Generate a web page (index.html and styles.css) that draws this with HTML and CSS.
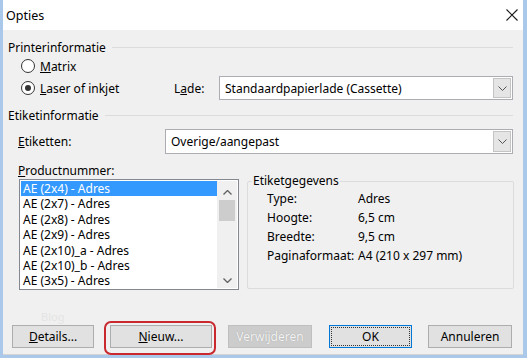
FILE: index.html
```html
<!DOCTYPE html>
<html lang="nl">
<head>
    <meta charset="UTF-8">
    <title>Opties</title>
    <link rel="stylesheet" href="styles.css">
</head>
<body>
    <div class="window">
        <!-- Titelbalk -->
        <header class="titlebar">
            <span class="title">Opties</span>
            <svg class="close" width="12" height="12" viewBox="0 0 12 12">
                <path d="M0.5 0.5 L11.5 11.5 M11.5 0.5 L0.5 11.5" stroke="#1a1a1a" stroke-width="1.1" fill="none"/>
            </svg>
        </header>

        <main class="content">
            <!-- Printerinformatie -->
            <div class="group-head">
                <span>Printerinformatie</span>
                <span class="line"></span>
            </div>
            <div class="radio-row first">
                <span class="radio"></span>
                <span><u>M</u>atrix</span>
            </div>
            <div class="radio-row second">
                <span class="radio checked"></span>
                <span class="radio-label"><u>L</u>aser of inkjet</span>
                <span class="lade-label">L<u>a</u>de:</span>
                <div class="select lade-select">
                    <span class="select-text">Standaardpapierlade (Cassette)</span>
                    <span class="select-btn">
                        <svg width="9" height="5" viewBox="0 0 9 5"><path d="M0.5 0.5 L4.5 4.5 L8.5 0.5" stroke="#555" fill="none"/></svg>
                    </span>
                </div>
            </div>

            <!-- Etiketinformatie -->
            <div class="group-head second-head">
                <span>Etiketinformatie</span>
                <span class="line"></span>
            </div>
            <div class="etiket-row">
                <span class="etiket-label"><u>E</u>tiketten:</span>
                <div class="select etiket-select">
                    <span class="select-text">Overige/aangepast</span>
                    <span class="select-btn">
                        <svg width="9" height="5" viewBox="0 0 9 5"><path d="M0.5 0.5 L4.5 4.5 L8.5 0.5" stroke="#555" fill="none"/></svg>
                    </span>
                </div>
            </div>
            <div class="product-label"><u>P</u>roductnummer:</div>

            <div class="product-row">
                <div class="listbox">
                    <ul class="list-items">
                        <li class="selected">AE (2x4) - Adres</li>
                        <li>AE (2x7) - Adres</li>
                        <li>AE (2x8) - Adres</li>
                        <li>AE (2x9) - Adres</li>
                        <li>AE (2x10)_a - Adres</li>
                        <li>AE (2x10)_b - Adres</li>
                        <li>AE (3x5) - Adres</li>
                    </ul>
                    <div class="scrollbar">
                        <svg width="9" height="5" viewBox="0 0 9 5"><path d="M0.5 4.5 L4.5 0.5 L8.5 4.5" stroke="#606060" stroke-width="1.3" fill="none"/></svg>
                        <span class="thumb"></span>
                        <span class="track"></span>
                        <svg width="9" height="5" viewBox="0 0 9 5"><path d="M0.5 0.5 L4.5 4.5 L8.5 0.5" stroke="#606060" stroke-width="1.3" fill="none"/></svg>
                    </div>
                </div>

                <fieldset class="details-box">
                    <legend>Etiketgegevens</legend>
                    <dl class="details">
                        <dt>Type:</dt><dd>Adres</dd>
                        <dt>Hoogte:</dt><dd>6,5 cm</dd>
                        <dt>Breedte:</dt><dd>9,5 cm</dd>
                        <dt>Paginaformaat:</dt><dd>A4 (210 x 297 mm)</dd>
                    </dl>
                </fieldset>
            </div>

            <div class="ghost">Blog</div>

            <!-- Knoppen -->
            <div class="buttons">
                <button class="btn btn-details"><u>D</u>etails...</button>
                <span class="highlight">
                    <button class="btn btn-new"><u>N</u>ieuw...</button>
                </span>
                <button class="btn btn-delete" disabled>Verwijderen</button>
                <button class="btn btn-ok"><span class="focus">OK</span></button>
                <button class="btn btn-cancel">Annuleren</button>
            </div>
        </main>
    </div>
</body>
</html>
```

FILE: styles.css
```css
:root {
    --bg: #f0f0f0;
    --line: #dcdcdc;
    --edge: #a9c8ea;
    --btn: #e1e1e1;
    --btn-border: #adadad;
    --select-blue: #3399ff;
}

body {
    margin: 0;
    background: #ffffff;
    font-family: "Noto Sans", "Open Sans", sans-serif;
    font-size: 12px;
    color: #000;
}

u {
    text-decoration: underline;
    text-underline-offset: 1px;
}

/* Venster */
.window {
    width: 520px;
    height: 355px;
    background: var(--bg);
    border-left: 3px solid var(--edge);
    border-right: 4px solid var(--edge);
    border-bottom: 3px solid var(--edge);
    display: flex;
    flex-direction: column;
}

.titlebar {
    height: 30px;
    background: #ffffff;
    display: flex;
    align-items: center;
    justify-content: space-between;
    padding: 0 5px 0 3px;
    flex-shrink: 0;
}

.title {
    font-size: 12.5px;
}

.close {
    margin-top: -1px;
}

.content {
    flex: 1;
    padding: 9px 0 0 5px;
    border-bottom: 1px solid #d4d4d4;
}

/* Groepskoppen */
.group-head {
    display: flex;
    align-items: center;
    gap: 6px;
    height: 16px;
    width: 505px;
}

.group-head .line {
    flex: 1;
    height: 1px;
    background: var(--line);
}

.second-head {
    margin-top: 7px;
}

/* Keuzerondjes */
.radio-row {
    display: flex;
    align-items: center;
    padding-left: 13px;
}

.radio-row.first {
    height: 20px;
    margin-top: 1px;
}

.radio-row.second {
    height: 24px;
}

.radio {
    width: 12px;
    height: 12px;
    border: 1px solid #333;
    border-radius: 50%;
    background: #fff;
    margin-right: 5px;
    position: relative;
    flex-shrink: 0;
}

.radio.checked::after {
    content: "";
    position: absolute;
    left: 3px;
    top: 3px;
    width: 6px;
    height: 6px;
    border-radius: 50%;
    background: #333;
}

.radio-label {
    width: 134px;
}

.lade-label {
    width: 45px;
}

/* Keuzelijsten */
.select {
    display: flex;
    align-items: center;
    justify-content: space-between;
    background: #fff;
    border: 1px solid #abadb3;
    box-sizing: border-box;
    padding: 1px 1px 1px 5px;
}

.lade-select {
    width: 294px;
    height: 24px;
}

.etiket-select {
    width: 348px;
    height: 25px;
}

.select-btn {
    width: 18px;
    align-self: stretch;
    background: #e5e5e5;
    border: 1px solid #c4c4c4;
    box-sizing: border-box;
    display: flex;
    align-items: center;
    justify-content: center;
}

.etiket-row {
    display: flex;
    align-items: center;
    margin-top: 6px;
    padding-left: 10px;
}

.etiket-label {
    width: 147px;
}

.product-label {
    margin-top: 9px;
    padding-left: 10px;
    height: 16px;
    line-height: 16px;
}

/* Productlijst */
.product-row {
    display: flex;
    align-items: flex-start;
    padding-left: 11px;
    gap: 8px;
}

.listbox {
    width: 220px;
    height: 111px;
    box-sizing: border-box;
    border: 1px solid #828790;
    background: #fff;
    display: flex;
    padding: 1px;
}

.list-items {
    list-style: none;
    margin: 0;
    padding: 0;
    flex: 1;
}

.list-items li {
    height: 15.4px;
    line-height: 15.4px;
    padding-left: 2px;
}

.list-items li.selected {
    background: var(--select-blue);
    color: #fff;
}

.scrollbar {
    width: 20px;
    background: #f0f0f0;
    display: flex;
    flex-direction: column;
    align-items: center;
    padding: 9px 0 5px;
    box-sizing: border-box;
}

.thumb {
    width: 16px;
    height: 21px;
    background: #cdcdcd;
    margin-top: 5px;
}

.track {
    flex: 1;
}

/* Etiketgegevens */
.details-box {
    width: 267px;
    height: 115px;
    box-sizing: border-box;
    margin: 0;
    border: 1px solid var(--line);
    border-radius: 2px;
    padding: 1px 0 0;
    position: relative;
    top: -5px;
}

.details-box legend {
    padding: 0 1px;
    margin-left: 4px;
    line-height: 14px;
}

.details {
    display: grid;
    grid-template-columns: 91px auto;
    grid-auto-rows: 19px;
    align-items: center;
    margin: 0;
    padding-left: 19px;
}

.details dd {
    margin: 0;
}

.ghost {
    color: #e4e4e4;
    font-size: 11px;
    padding-left: 33px;
    margin-top: 16px;
    height: 14px;
    line-height: 14px;
}

/* Knoppen */
.buttons {
    display: flex;
    align-items: center;
    gap: 16px;
    padding-left: 4px;
    margin-top: 1px;
}

.btn {
    height: 23px;
    background: var(--btn);
    border: 1px solid var(--btn-border);
    font-family: inherit;
    font-size: 12px;
    color: #000;
    padding: 0;
    box-sizing: border-box;
}

.btn-details { width: 82px; }
.btn-new { width: 102px; }
.btn-delete { width: 84px; }
.btn-ok { width: 83px; margin-left: 1px; }
.btn-cancel { width: 84px; }

.btn-delete {
    background: #cccccc;
    border-color: #bfbfbf;
    color: #f4f4f4;
    text-shadow: 0 0 1px #9a9a9a;
}

.btn-ok {
    border: 1px solid #0078d7;
    padding: 1px;
}

.btn-ok .focus {
    display: flex;
    align-items: center;
    justify-content: center;
    height: 100%;
    box-sizing: border-box;
    border: 1px dotted #333;
}

.highlight {
    position: relative;
    display: flex;
}

.highlight::after {
    content: "";
    position: absolute;
    left: -6px;
    right: -4px;
    top: -4px;
    bottom: -7px;
    border: 2px solid #c8282e;
    border-radius: 7px;
}
```
